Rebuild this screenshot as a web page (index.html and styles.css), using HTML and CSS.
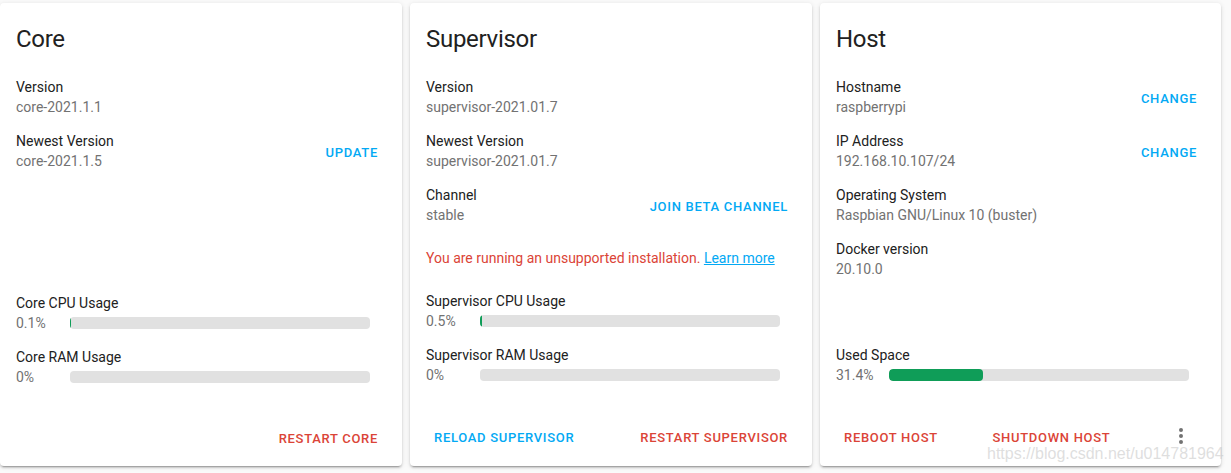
FILE: index.html
```html
<!DOCTYPE html>
<html>
<head>
<meta charset="utf-8">
<link rel="stylesheet" href="styles.css">
</head>
<body>
<div class="cards">
  <div class="card">
    <div class="card-header">Core</div>
    <div class="card-content card-content-core">
      <div class="row">
        <div class="row-text"><div class="label">Version</div><div class="value">core-2021.1.1</div></div>
      </div>
      <div class="row">
        <div class="row-text"><div class="label">Newest Version</div><div class="value">core-2021.1.5</div></div>
        <button class="btn btn-blue">Update</button>
      </div>
      <div class="metrics">
        <div class="metric">
          <div class="label">Core CPU Usage</div>
          <div class="metric-line"><span class="pct">0.1%</span><div class="bar"><div class="fill" style="width:0.1%"></div></div></div>
        </div>
        <div class="metric">
          <div class="label">Core RAM Usage</div>
          <div class="metric-line"><span class="pct">0%</span><div class="bar"><div class="fill" style="width:0%"></div></div></div>
        </div>
      </div>
    </div>
    <div class="card-actions card-actions-end">
      <button class="btn btn-red">Restart Core</button>
    </div>
  </div>

  <div class="card">
    <div class="card-header">Supervisor</div>
    <div class="card-content">
      <div class="row">
        <div class="row-text"><div class="label">Version</div><div class="value">supervisor-2021.01.7</div></div>
      </div>
      <div class="row">
        <div class="row-text"><div class="label">Newest Version</div><div class="value">supervisor-2021.01.7</div></div>
      </div>
      <div class="row">
        <div class="row-text"><div class="label">Channel</div><div class="value">stable</div></div>
        <button class="btn btn-blue">Join beta channel</button>
      </div>
      <div class="warning">You are running an unsupported installation. <a class="link" href="#">Learn more</a></div>
      <div class="metrics">
        <div class="metric">
          <div class="label">Supervisor CPU Usage</div>
          <div class="metric-line"><span class="pct">0.5%</span><div class="bar"><div class="fill" style="width:0.5%"></div></div></div>
        </div>
        <div class="metric">
          <div class="label">Supervisor RAM Usage</div>
          <div class="metric-line"><span class="pct">0%</span><div class="bar"><div class="fill" style="width:0%"></div></div></div>
        </div>
      </div>
    </div>
    <div class="card-actions">
      <button class="btn btn-blue">Reload Supervisor</button>
      <button class="btn btn-red">Restart Supervisor</button>
    </div>
  </div>

  <div class="card">
    <div class="card-header">Host</div>
    <div class="card-content">
      <div class="row">
        <div class="row-text"><div class="label">Hostname</div><div class="value">raspberrypi</div></div>
        <button class="btn btn-blue">Change</button>
      </div>
      <div class="row">
        <div class="row-text"><div class="label">IP Address</div><div class="value">192.168.10.107/24</div></div>
        <button class="btn btn-blue">Change</button>
      </div>
      <div class="row">
        <div class="row-text"><div class="label">Operating System</div><div class="value">Raspbian GNU/Linux 10 (buster)</div></div>
      </div>
      <div class="row">
        <div class="row-text"><div class="label">Docker version</div><div class="value">20.10.0</div></div>
      </div>
      <div class="metrics">
        <div class="metric">
          <div class="label">Used Space</div>
          <div class="metric-line"><span class="pct pct-host">31.4%</span><div class="bar"><div class="fill" style="width:31.4%"></div></div></div>
        </div>
      </div>
    </div>
    <div class="card-actions">
      <button class="btn btn-red">Reboot Host</button>
      <button class="btn btn-red">Shutdown Host</button>
      <button class="icon-btn" aria-label="menu">
        <svg viewBox="0 0 24 24" width="24" height="24"><path d="M12,16A2,2 0 0,1 14,18A2,2 0 0,1 12,20A2,2 0 0,1 10,18A2,2 0 0,1 12,16M12,10A2,2 0 0,1 14,12A2,2 0 0,1 12,14A2,2 0 0,1 10,12A2,2 0 0,1 12,10M12,4A2,2 0 0,1 14,6A2,2 0 0,1 12,8A2,2 0 0,1 10,6A2,2 0 0,1 12,4Z"/></svg>
      </button>
    </div>
  </div>
</div>
<div class="watermark">https://blog.csdn.net/u014781964</div>
</body>
</html>
```

FILE: styles.css
```css
* { box-sizing: border-box; }

body {
  margin: 0;
  background: #fafafa;
  font-family: Roboto, "Noto Sans", sans-serif;
  color: #212121;
  position: relative;
  width: 1231px;
  height: 473px;
  overflow: hidden;
}

.cards {
  display: grid;
  grid-template-columns: 402px 402px 401px;
  column-gap: 8px;
  padding-top: 3px;
}

.card {
  height: 463px;
  background: #fff;
  border-radius: 4px;
  box-shadow: 0 2px 2px 0 rgba(0,0,0,0.14), 0 1px 5px 0 rgba(0,0,0,0.12), 0 3px 1px -2px rgba(0,0,0,0.2);
  display: flex;
  flex-direction: column;
}

.card-header {
  font-size: 24px;
  line-height: 48px;
  letter-spacing: -0.012em;
  padding: 12px 16px 7px;
  color: #212121;
}

.card-content {
  flex: 1;
  display: flex;
  flex-direction: column;
  padding: 0 16px 19px;
}

.card-content-core {
  padding-bottom: 17px;
}

.row {
  display: flex;
  align-items: center;
  justify-content: space-between;
  padding: 7px 0;
}

.label {
  font-size: 14px;
  line-height: 20px;
  color: #212121;
}

.value {
  font-size: 14px;
  line-height: 20px;
  color: #727272;
}

.btn {
  height: 36px;
  padding: 2px 8px 0;
  border: none;
  background: none;
  font-family: Roboto, sans-serif;
  font-size: 13px;
  font-weight: 500;
  letter-spacing: 0.7px;
  text-transform: uppercase;
  cursor: pointer;
  white-space: nowrap;
}

.btn-blue { color: #03a9f4; }
.btn-red { color: #db4437; }

.warning {
  margin-top: 16px;
  font-size: 14px;
  line-height: 20px;
  color: #db4437;
}

.link {
  color: #03a9f4;
  text-decoration: underline;
}

.metrics {
  margin-top: auto;
}

.metric {
  padding: 7px 0;
}

.metric-line {
  display: flex;
  align-items: center;
  height: 20px;
}

.pct {
  width: 54px;
  font-size: 14px;
  color: #727272;
}

.pct-host {
  width: 53px;
}

.bar {
  width: 300px;
  height: 12px;
  background: #e1e1e1;
  border-radius: 4px;
  overflow: hidden;
}

.fill {
  height: 100%;
  background: #0f9d58;
  border-radius: 4px;
}

.card-actions {
  display: flex;
  justify-content: space-between;
  align-items: center;
  height: 55px;
  padding: 7px 16px 12px;
}

.card-actions-end {
  justify-content: flex-end;
  padding-top: 8px;
  padding-bottom: 11px;
}

.icon-btn {
  width: 48px;
  height: 36px;
  padding: 0;
  border: none;
  background: none;
  display: flex;
  align-items: center;
  justify-content: center;
  fill: #727272;
}

.watermark {
  position: absolute;
  left: 987px;
  top: 445px;
  font-family: "Liberation Sans", Arial, sans-serif;
  font-size: 16px;
  line-height: 18px;
  color: rgba(190, 190, 190, 0.5);
  white-space: nowrap;
}
```
